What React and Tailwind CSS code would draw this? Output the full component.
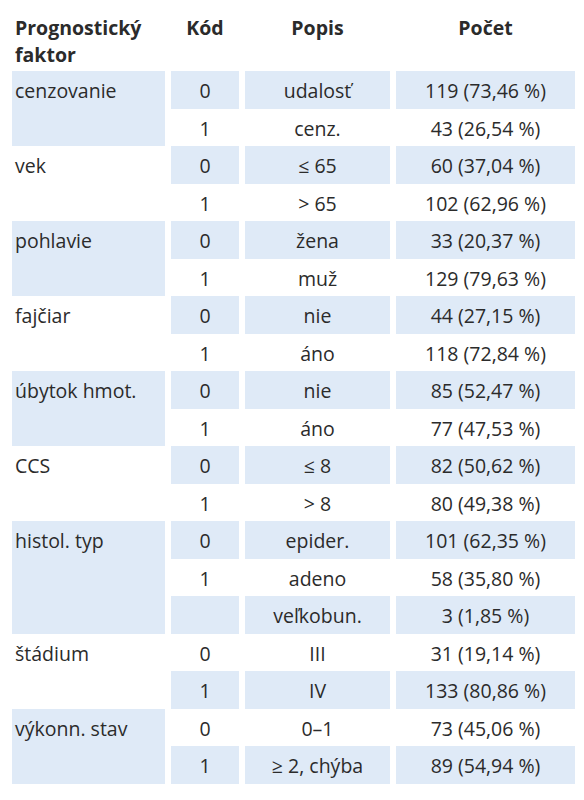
const groups = [
  { name: "cenzovanie", rows: [["0", "udalosť", "119 (73,46 %)"], ["1", "cenz.", "43 (26,54 %)"]] },
  { name: "vek", rows: [["0", "≤ 65", "60 (37,04 %)"], ["1", "> 65", "102 (62,96 %)"]] },
  { name: "pohlavie", rows: [["0", "žena", "33 (20,37 %)"], ["1", "muž", "129 (79,63 %)"]] },
  { name: "fajčiar", rows: [["0", "nie", "44 (27,15 %)"], ["1", "áno", "118 (72,84 %)"]] },
  { name: "úbytok hmot.", rows: [["0", "nie", "85 (52,47 %)"], ["1", "áno", "77 (47,53 %)"]] },
  { name: "CCS", rows: [["0", "≤ 8", "82 (50,62 %)"], ["1", "> 8", "80 (49,38 %)"]] },
  {
    name: "histol. typ",
    rows: [["0", "epider.", "101 (62,35 %)"], ["1", "adeno", "58 (35,80 %)"], ["", "veľkobun.", "3 (1,85 %)"]],
  },
  { name: "štádium", rows: [["0", "III", "31 (19,14 %)"], ["1", "IV", "133 (80,86 %)"]] },
  { name: "výkonn. stav", rows: [["0", "0–1", "73 (45,06 %)"], ["1", "≥ 2, chýba", "89 (54,94 %)"]] },
];

const shade = "bg-[#dfeaf7]";

export default function App() {
  let rowIndex = 0;
  const cells = [];

  groups.forEach((g, gi) => {
    cells.push(
      <div
        key={`g${gi}`}
        className={`col-start-1 pl-[3px] pt-[1px] ${g.rows.length === 3 ? "row-span-3" : "row-span-2"} ${gi % 2 === 0 ? shade : ""}`}
      >
        {g.name}
      </div>
    );
    g.rows.forEach((r, ri) => {
      const bg = rowIndex % 2 === 0 ? shade : "";
      cells.push(
        <div key={`k${gi}-${ri}`} className={`col-start-2 text-center pt-[1px] ${bg}`}>{r[0]}</div>,
        <div key={`p${gi}-${ri}`} className={`col-start-3 text-center pt-[1px] ${bg}`}>{r[1]}</div>,
        <div key={`c${gi}-${ri}`} className={`col-start-4 text-center pt-[1px] ${bg}`}>{r[2]}</div>
      );
      rowIndex++;
    });
  });

  return (
    <div className="w-[584px] h-[800px] bg-white pl-[12px] text-[#2b2b2b] font-['Open_Sans',sans-serif] text-[19.5px]">
      <div className="grid grid-cols-[153px_68px_145px_179px] gap-x-[6px] grid-rows-[71px] auto-rows-[37.5px] leading-[37.5px]">
        <div className="pt-[14px] pl-[3px] font-bold leading-[27px]">Prognostický faktor</div>
        <div className="pt-[14px] text-center font-bold leading-[27px]">Kód</div>
        <div className="pt-[14px] text-center font-bold leading-[27px]">Popis</div>
        <div className="pt-[14px] text-center font-bold leading-[27px]">Počet</div>
        {cells}
      </div>
    </div>
  );
}
